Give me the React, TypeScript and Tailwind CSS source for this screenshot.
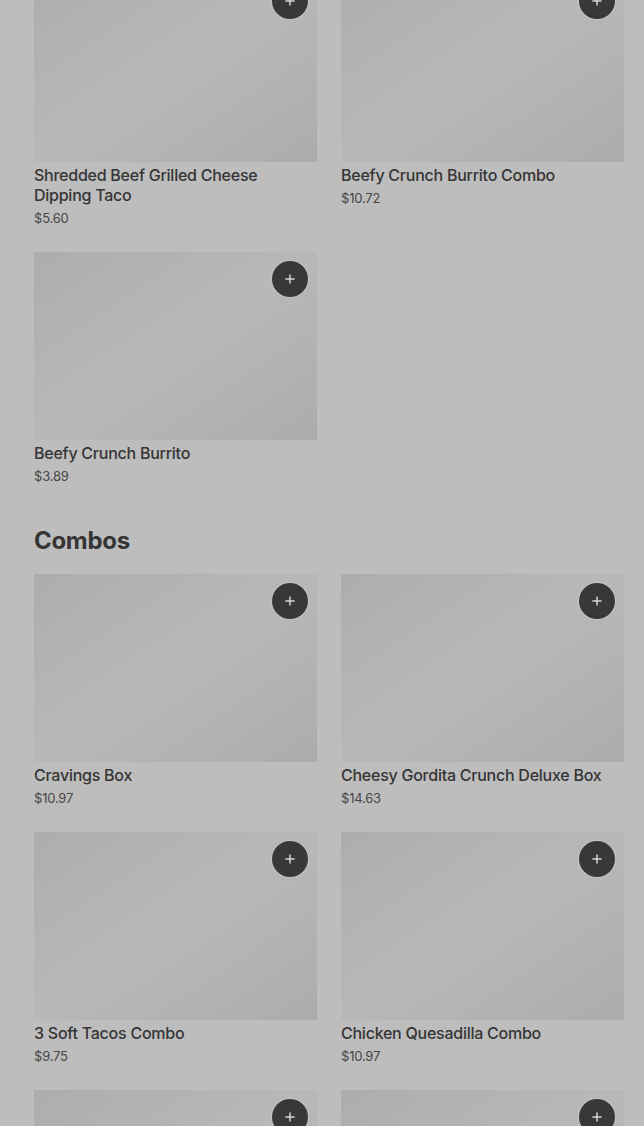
import { Plus } from "lucide-react";

type Item = { name: string; price: string };

const topItems: Item[] = [
  { name: "Shredded Beef Grilled Cheese Dipping Taco", price: "$5.60" },
  { name: "Beefy Crunch Burrito Combo", price: "$10.72" },
  { name: "Beefy Crunch Burrito", price: "$3.89" },
];

const combos: Item[] = [
  { name: "Cravings Box", price: "$10.97" },
  { name: "Cheesy Gordita Crunch Deluxe Box", price: "$14.63" },
  { name: "3 Soft Tacos Combo", price: "$9.75" },
  { name: "Chicken Quesadilla Combo", price: "$10.97" },
  { name: "Nacho Fries Box", price: "$8.49" },
  { name: "Crunchwrap Supreme Combo", price: "$11.29" },
];

const MenuCard = ({ item }: { item: Item }) => {
  return (
    <div className="flex flex-col">
      <div className="relative h-[188px] w-full bg-gradient-to-br from-[#adadad] via-[#b8b8b8] to-[#acacac]">
        <button className="absolute right-[9px] top-[9px] flex h-9 w-9 items-center justify-center rounded-full bg-[#383838] text-[#d6d6d6] ring-1 ring-[#c4c4c4]">
          <Plus size={14} strokeWidth={2.5} />
        </button>
      </div>
      <div className="mt-[3px] text-[16px] font-medium leading-5 tracking-[-0.25px] text-[#353535]">
        {item.name}
      </div>
      <div className="mt-[3px] text-[13px] leading-5 tracking-[-0.2px] text-[#474747]">
        {item.price}
      </div>
    </div>
  );
};

const App = () => {
  return (
    <div
      className="h-[1126px] overflow-hidden bg-[#bdbdbd] pl-[34px] pr-[20px]"
      style={{ fontFamily: "Inter, 'Liberation Sans', sans-serif" }}
    >
      <div className="-mt-[26px] grid grid-cols-2 gap-x-6 gap-y-6">
        {topItems.map((item) => (
          <MenuCard key={item.name} item={item} />
        ))}
      </div>
      <h2 className="mt-[39px] text-[24px] font-bold leading-8 tracking-[-0.3px] text-[#353535]">
        Combos
      </h2>
      <div className="mt-[17px] grid grid-cols-2 gap-x-6 gap-y-6">
        {combos.map((item) => (
          <MenuCard key={item.name} item={item} />
        ))}
      </div>
    </div>
  );
};

export default App;
